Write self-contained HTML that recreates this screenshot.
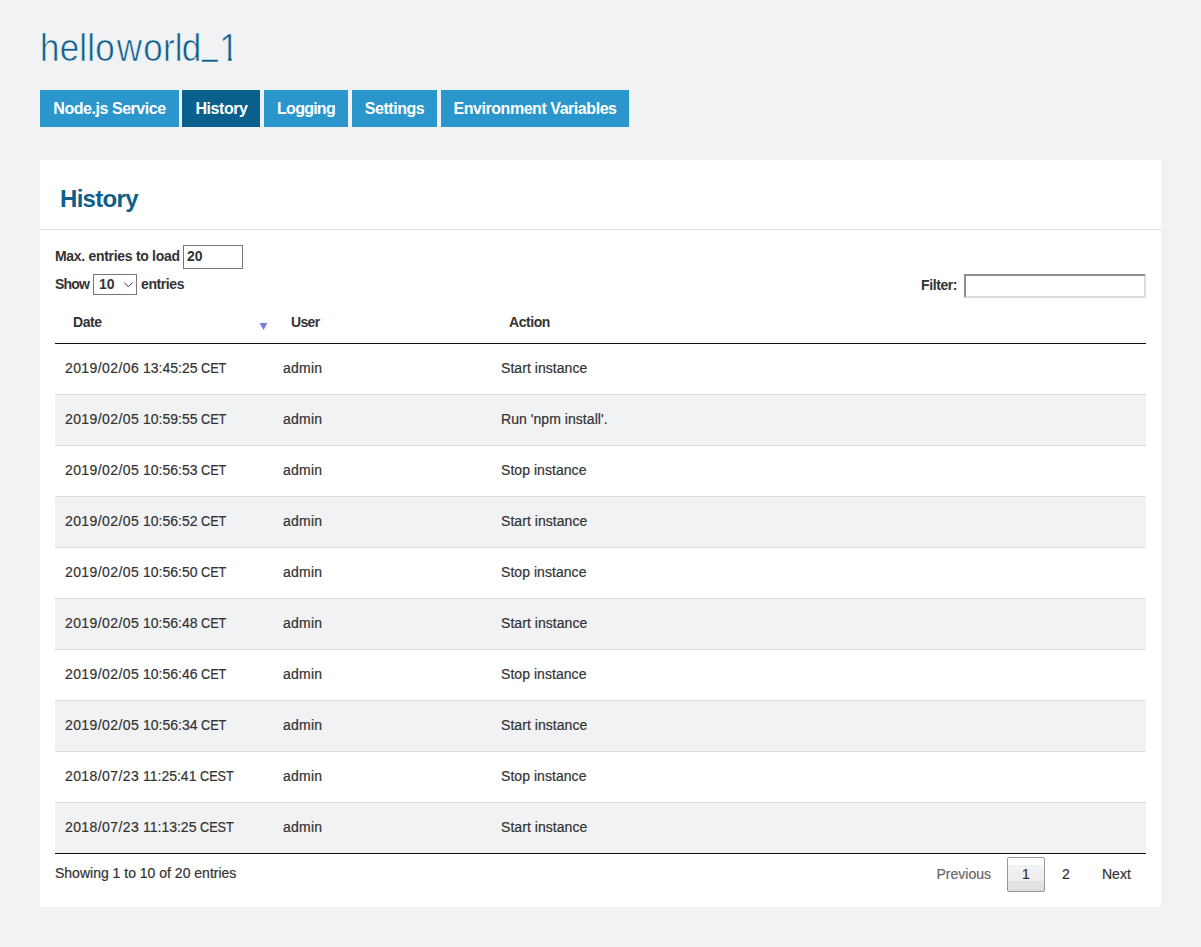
<!DOCTYPE html>
<html lang="en">
<head>
<meta charset="utf-8">
<title>helloworld_1</title>
<style>
*{box-sizing:border-box;}
html,body{margin:0;padding:0;}
body{background:#f0f2f4;font-family:"Liberation Sans",sans-serif;font-size:14px;color:#333;width:1201px;height:947px;overflow:hidden;position:relative;}
h1{position:absolute;left:40px;top:23.6px;margin:0;font-weight:normal;font-size:38px;line-height:48px;color:#0d5f8b;white-space:nowrap;letter-spacing:0.2px;-webkit-text-stroke:0.65px #f0f2f4;transform:scaleX(0.92);transform-origin:0 0;}
h1 .us{position:relative;top:-6.5px;display:inline-block;transform:scaleX(0.8);transform-origin:0 0;margin-left:0.8px;}
.tabs{position:absolute;left:40px;top:90px;height:37px;}
.tab{position:absolute;top:0;height:37px;background:#2a96cc;color:#fff;font-weight:bold;font-size:16px;line-height:37px;text-align:center;white-space:nowrap;letter-spacing:-0.45px;}
.tab.active{background:#0a608c;}
.panel{position:absolute;left:40px;top:160px;width:1121px;height:747px;background:#fff;}
.panel h2{position:absolute;left:20px;top:23px;margin:0;font-size:24px;line-height:32px;font-weight:bold;color:#0d5f8b;white-space:nowrap;letter-spacing:-0.7px;}
.hr{position:absolute;left:0;top:69px;width:1121px;height:1px;background:#dedede;}
.lbl{position:absolute;font-weight:bold;font-size:14px;line-height:20px;color:#333;white-space:nowrap;letter-spacing:-0.4px;}
.inp{position:absolute;background:#fff;border:1px solid #767676;font-size:14px;color:#333;white-space:nowrap;}
.filter{position:absolute;background:#fff;border:2px solid;border-color:#8e8e8e #dcdcdc #dcdcdc #8e8e8e;}
table{position:absolute;left:15px;top:141px;width:1091px;border-collapse:separate;border-spacing:0;table-layout:fixed;}
th{height:43px;text-align:left;font-weight:bold;font-size:14px;padding:0 18px 1px;border-bottom:1px solid #111;color:#333;position:relative;white-space:nowrap;letter-spacing:-0.45px;}
td{-webkit-text-stroke:0.2px #333;height:51px;padding:0 10px 2px;border-top:1px solid #ddd;font-size:14px;color:#333;white-space:nowrap;}
tbody tr:first-child td{border-top:none;height:50px;}
tr.even td{background:#f1f2f4;}
tbody tr:last-child td{border-bottom:1px solid #111;height:52px;}
.sort{position:absolute;left:204px;top:21px;}
.info{-webkit-text-stroke:0.2px #333;position:absolute;left:15px;top:703px;font-size:14px;line-height:20px;color:#333;white-space:nowrap;}
.pg{-webkit-text-stroke:0.2px;position:absolute;font-size:14px;line-height:20px;color:#333;white-space:nowrap;}
.pgbtn{-webkit-text-stroke:0.2px #333;position:absolute;left:967px;top:697px;width:38px;height:35px;border:1px solid #979797;border-radius:2px;background:linear-gradient(to bottom,#fff 0,#fff 7px,#f1f2f3 7px,#f1f2f3 14px,#eee 14px,#eee 23px,#e1e1e1 23px,#e1e1e1 31px,#dcdcdc 31px);text-align:center;line-height:33px;font-size:14px;color:#333;}
.d{letter-spacing:0.4px;}
.u{letter-spacing:0.25px;}
.a{letter-spacing:0.05px;}
.z{display:inline-block;transform:scaleX(0.905);transform-origin:0 50%;margin-left:-0.5px;}
</style>
</head>
<body>
<h1 id="title">hello<span style="margin-left:2.2px">w</span><span style="margin-left:1.2px">o</span>rl<span style="margin-left:-1.2px">d</span><span class="us">_</span><span id="one" style="margin-left:-2.6px;display:inline-block;clip-path:polygon(0 0,100% 0,100% 34px,13.5px 34px,13.5px 48px,9.6px 48px,9.6px 34px,0 34px);">1</span></h1>
<div class="tabs">
  <div class="tab" style="left:0;width:139px;"><span id="tab1">Node.js Service</span></div>
  <div class="tab active" style="left:142px;width:78px;"><span id="tab2" style="padding-left:1px">History</span></div>
  <div class="tab" style="left:224px;width:84px;"><span id="tab3" style="letter-spacing:-0.75px">Logging</span></div>
  <div class="tab" style="left:312px;width:85px;"><span id="tab4">Settings</span></div>
  <div class="tab" style="left:401px;width:188px;"><span id="tab5">Environment Variables</span></div>
</div>
<div class="panel">
  <h2 id="h2">History</h2>
  <div class="hr"></div>
  <div class="lbl" id="max" style="left:15px;top:86px;letter-spacing:-0.3px;">Max. entries to load</div>
  <div class="inp" style="left:143px;top:85px;width:60px;height:24px;line-height:20px;padding-left:3px;font-weight:bold;"><span id="v20">20</span></div>
  <div class="lbl" id="show" style="left:15px;top:114px;letter-spacing:-0.8px;">Show</div>
  <div class="inp" style="left:53px;top:114px;width:44px;height:21px;line-height:18px;padding-left:5px;font-weight:bold;"><span id="v10">10</span>
    <svg style="position:absolute;left:30px;top:7px" width="9" height="6" viewBox="0 0 9 6"><path d="M0.2 0.8 L4.3 4.7 L8.4 0.8" fill="none" stroke="#3a3040" stroke-width="1"/></svg>
  </div>
  <div class="lbl" id="entries" style="left:101px;top:114px;">entries</div>
  <div class="lbl" id="filter" style="left:881px;top:115px;">Filter:</div>
  <div class="filter" style="left:924px;top:114px;width:182px;height:24px;"></div>
  <table>
    <colgroup><col style="width:218px"><col style="width:218px"><col></colgroup>
    <thead><tr><th><span id="date">Date</span><svg class="sort" width="10" height="9" viewBox="0 0 10 9"><path d="M0.6 1 L8.4 1 L4.5 8 Z" fill="#7a7fdb"/></svg></th><th><span id="user" style="letter-spacing:-0.65px">User</span></th><th><span id="action">Action</span></th></tr></thead>
    <tbody>
      <tr><td><span class="d">2019/02/06</span> <span class="t">13:45:25</span> <span class="z">CET</span></td><td><span class="u">admin</span></td><td><span class="a">Start instance</span></td></tr>
      <tr class="even"><td><span class="d">2019/02/05</span> <span class="t">10:59:55</span> <span class="z">CET</span></td><td><span class="u">admin</span></td><td><span class="a">Run 'npm install'.</span></td></tr>
      <tr><td><span class="d">2019/02/05</span> <span class="t">10:56:53</span> <span class="z">CET</span></td><td><span class="u">admin</span></td><td><span class="a">Stop instance</span></td></tr>
      <tr class="even"><td><span class="d">2019/02/05</span> <span class="t">10:56:52</span> <span class="z">CET</span></td><td><span class="u">admin</span></td><td><span class="a">Start instance</span></td></tr>
      <tr><td><span class="d">2019/02/05</span> <span class="t">10:56:50</span> <span class="z">CET</span></td><td><span class="u">admin</span></td><td><span class="a">Stop instance</span></td></tr>
      <tr class="even"><td><span class="d">2019/02/05</span> <span class="t">10:56:48</span> <span class="z">CET</span></td><td><span class="u">admin</span></td><td><span class="a">Start instance</span></td></tr>
      <tr><td><span class="d">2019/02/05</span> <span class="t">10:56:46</span> <span class="z">CET</span></td><td><span class="u">admin</span></td><td><span class="a">Stop instance</span></td></tr>
      <tr class="even"><td><span class="d">2019/02/05</span> <span class="t">10:56:34</span> <span class="z">CET</span></td><td><span class="u">admin</span></td><td><span class="a">Start instance</span></td></tr>
      <tr><td><span class="d">2018/07/23</span> <span class="t">11:25:41</span> <span class="z">CEST</span></td><td><span class="u">admin</span></td><td><span class="a">Stop instance</span></td></tr>
      <tr class="even"><td><span class="d">2018/07/23</span> <span class="t">11:13:25</span> <span class="z">CEST</span></td><td><span class="u">admin</span></td><td><span class="a">Start instance</span></td></tr>
    </tbody>
  </table>
  <div class="info" id="info">Showing 1 to 10 of 20 entries</div>
  <div class="pg" id="prev" style="left:896.5px;top:704px;color:#666;">Previous</div>
  <div class="pgbtn">1</div>
  <div class="pg" id="p2" style="left:1022px;top:704px;">2</div>
  <div class="pg" id="next" style="left:1062px;top:704px;">Next</div>
</div>
</body>
</html>
